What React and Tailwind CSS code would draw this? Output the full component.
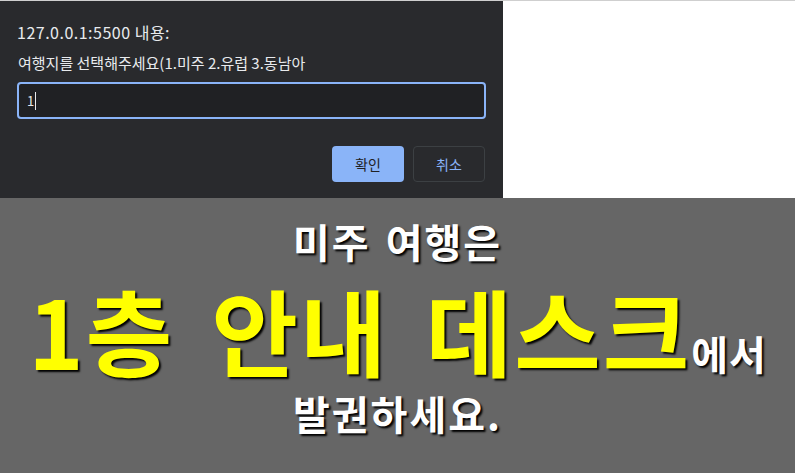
export default function App() {
  return (
    <div className="w-[795px] h-[473px] flex flex-col bg-white overflow-hidden" style={{ fontFamily: '"Noto Sans CJK KR", "Noto Sans", sans-serif' }}>
      {/* prompt dialog row */}
      <div className="flex h-[198px] border-t border-[#cfcfcf]">
        <div className="w-[503px] h-full bg-[#292a2d] text-[#e8eaed] px-[17px] pt-[19px] flex flex-col">
          <div className="text-[16px] leading-[24px] tracking-[0.5px]">127.0.0.1:5500 내용:</div>
          <div className="text-[15px] leading-[20px] mt-[9px] pl-[1px]">여행지를 선택해주세요(1.미주 2.유럽 3.동남아</div>
          <div className="mt-[9px] h-[37px] w-[469px] border-2 border-[#8ab4f8] rounded-[4px] bg-[#202124] flex items-center pl-[8px] text-[13px]">
            <span>1</span>
            <span className="w-px h-[18px] bg-[#e8eaed] ml-[1px]" />
          </div>
          <div className="flex justify-end gap-[9px] mt-[27px] pr-[1px]">
            <button className="w-[72px] h-[36px] rounded-[4px] bg-[#8ab4f8] text-[#202124] text-[14px]">확인</button>
            <button className="w-[72px] h-[36px] rounded-[4px] border border-[#3c4043] text-[#8ab4f8] text-[14px]">취소</button>
          </div>
        </div>
        <div className="flex-1" />
      </div>

      {/* notice area */}
      <div className="flex-1 bg-[#666666] flex flex-col items-center font-bold [text-shadow:2px_2px_2px_#000]">
        <div className="text-white text-[40px] leading-[40px] mt-[23px] tracking-[2px] [word-spacing:4px]">미주 여행은</div>
        <div className="flex items-baseline mt-[26px]">
          <span className="text-[#ffff00] text-[94px] leading-[84px] tracking-[2px] [word-spacing:14px]">1층 안내 데스크</span>
          <span className="text-white text-[40px] leading-[40px] tracking-[1px]">에서</span>
        </div>
        <div className="text-white text-[40px] leading-[40px] mt-[20px] tracking-[2px]">발권하세요.</div>
      </div>
    </div>
  )
}
